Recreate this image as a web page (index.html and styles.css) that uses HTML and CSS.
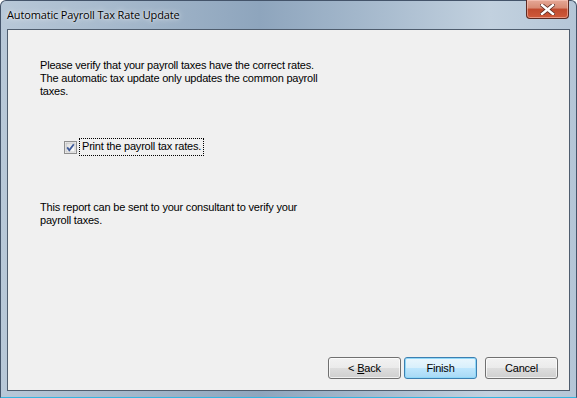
FILE: index.html
```html
<!DOCTYPE html>
<html lang="en">
<head>
    <meta charset="UTF-8">
    <title>Automatic Payroll Tax Rate Update</title>
    <link rel="stylesheet" href="styles.css">
</head>
<body>
    <div class="window">
        <div class="titlebar">
            <span class="title">Automatic Payroll Tax Rate Update</span>
            <button class="close-btn" aria-label="Close">
                <svg width="15" height="11" viewBox="0 0 15 11">
                    <path d="M2 1 L13 10 M13 1 L2 10" stroke="#5a2a22" stroke-width="4" stroke-linecap="square"/>
                    <path d="M2 1 L13 10 M13 1 L2 10" stroke="#ffffff" stroke-width="2.4" stroke-linecap="square"/>
                </svg>
            </button>
        </div>

        <div class="client">
            <p class="text">
                Please verify that your payroll taxes have the correct rates.<br>
                The automatic tax update only updates the common payroll<br>
                taxes.
            </p>

            <label class="check-row">
                <span class="checkbox">
                    <svg width="13" height="13" viewBox="0 0 13 13">
                        <defs>
                            <linearGradient id="cbg" x1="0" y1="0" x2="1" y2="1">
                                <stop offset="0" stop-color="#dcdcdc"/>
                                <stop offset="1" stop-color="#ffffff"/>
                            </linearGradient>
                        </defs>
                        <rect x="0.5" y="0.5" width="12" height="12" fill="#f4f4f4" stroke="#8f8f8f"/>
                        <rect x="2" y="2" width="9" height="9" fill="url(#cbg)" stroke="#b0b0b0" stroke-width="0.6"/>
                        <path d="M3.2 6.4 L5.3 9.2 L9.8 3.2" fill="none" stroke="#3d5a9a" stroke-width="1.8"/>
                    </svg>
                </span>
                <span class="check-label">Print the payroll tax rates.</span>
            </label>

            <p class="text note">
                This report can be sent to your consultant to verify your<br>
                payroll taxes.
            </p>

            <div class="buttons">
                <button class="button">&lt; <u>B</u>ack</button>
                <button class="button default">Finish</button>
                <button class="button cancel">Cancel</button>
            </div>
        </div>
    </div>
</body>
</html>
```

FILE: styles.css
```css
* { margin: 0; padding: 0; box-sizing: border-box; }

body {
    width: 577px;
    height: 398px;
    overflow: hidden;
    font-family: 'Liberation Sans', Arial, sans-serif;
    font-size: 11px;
    letter-spacing: -0.2px;
    color: #000000;
}

.window {
    width: 577px;
    height: 398px;
    display: flex;
    flex-direction: column;
    background: linear-gradient(to right, #b8c8d8 0%, #a6b9cc 20%, #8ea5bd 45%, #a3b7cb 62%, #c2d1df 85%, #b5c6d7 100%);
    border: 1px solid #44546a;
    border-bottom-color: #34b4e0;
    border-radius: 6px 6px 0 0;
}

.titlebar {
    height: 28px;
    display: flex;
    align-items: flex-start;
    justify-content: space-between;
    padding-left: 6px;
    padding-right: 7px;
}

.title {
    font-family: 'Open Sans', 'Noto Sans', sans-serif;
    font-size: 11px;
    letter-spacing: -0.15px;
    color: #000000;
    margin-top: 6px;
    text-shadow: 0 0 6px rgba(255, 255, 255, 0.9), 0 0 2px rgba(255, 255, 255, 0.8);
}

.close-btn {
    width: 43px;
    height: 19px;
    margin-top: -1px;
    border: 1px solid #5c2a22;
    border-top: none;
    border-radius: 0 0 4px 4px;
    background: linear-gradient(#e5a896 0%, #d88a73 45%, #c04a2e 50%, #cf5a3a 100%);
    box-shadow: inset 0 0 0 1px rgba(255, 210, 200, 0.5);
    display: flex;
    align-items: center;
    justify-content: center;
}

.client {
    flex: 1;
    margin: 0 6px 6px 6px;
    background: #f0f0f0;
    border: 1px solid #4f5d6e;
    display: flex;
    flex-direction: column;
    padding: 29px 11px 11px 32px;
}

.text {
    line-height: 13px;
}

.check-row {
    display: flex;
    align-items: center;
    margin-top: 40px;
    margin-left: 24px;
}

.checkbox {
    width: 13px;
    height: 13px;
    display: flex;
}

.check-label {
    margin-left: 2px;
    padding: 1px 2px 2px 2px;
    border: 1px dotted #000000;
    line-height: 13px;
}

.note {
    margin-top: 45px;
}

.buttons {
    margin-top: auto;
    display: flex;
    justify-content: flex-end;
}

.button {
    width: 73px;
    height: 22px;
    font-family: 'Liberation Sans', Arial, sans-serif;
    font-size: 11px;
    letter-spacing: -0.2px;
    color: #000000;
    border: 1px solid #707070;
    border-radius: 3px;
    background: linear-gradient(#f2f2f2 0%, #ebebeb 48%, #dddddd 52%, #cfcfcf 100%);
    box-shadow: inset 0 0 0 1px rgba(255, 255, 255, 0.7);
}

.button.default {
    margin-left: 3px;
    border-color: #3c7fb1;
    background: linear-gradient(#eaf6fd 0%, #d9f0fc 48%, #bee6fd 52%, #a7d9f5 100%);
    box-shadow: inset 0 0 0 1px #90d8f8;
}

.button.cancel {
    margin-left: 8px;
}
```
